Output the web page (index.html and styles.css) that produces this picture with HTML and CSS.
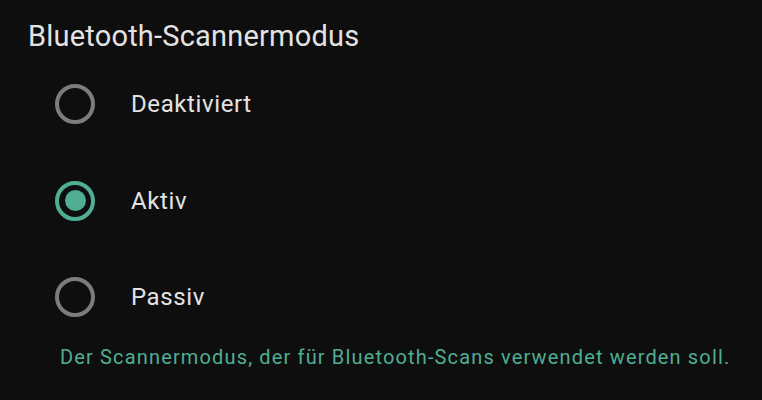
FILE: index.html
```html
<!DOCTYPE html>
<html lang="de">
<head>
    <meta charset="UTF-8">
    <title>Bluetooth-Scannermodus</title>
    <link rel="stylesheet" href="styles.css">
</head>
<body>
    <div class="dialog">
        <h1 class="dialog-title">Bluetooth-Scannermodus</h1>

        <ul class="choices">
            <li class="choice">
                <span class="radio"></span>
                <span class="choice-label">Deaktiviert</span>
            </li>
            <li class="choice">
                <span class="radio checked"></span>
                <span class="choice-label">Aktiv</span>
            </li>
            <li class="choice">
                <span class="radio"></span>
                <span class="choice-label">Passiv</span>
            </li>
        </ul>

        <p class="summary">Der Scannermodus, der für Bluetooth-Scans verwendet werden soll.</p>
    </div>
</body>
</html>
```

FILE: styles.css
```css
:root {
    --bg: #0e0e0e;
    --text: #e3e3e3;
    --muted: #7c7c7c;
    --accent: #4fae94;
}

* {
    box-sizing: border-box;
    margin: 0;
    padding: 0;
}

html, body {
    height: 100%;
}

body {
    font-family: Roboto, "Noto Sans", sans-serif;
    background-color: var(--bg);
    color: var(--text);
    overflow: hidden;
}

.dialog {
    padding: 18px 0 0 28px;
}

.dialog-title {
    font-size: 29px;
    font-weight: 400;
    line-height: 36px;
    letter-spacing: 0.2px;
}

.choices {
    list-style: none;
    margin-top: 2px;
    padding-left: 27px;
}

.choice {
    display: flex;
    align-items: center;
    height: 96.5px;
}

.radio {
    width: 40px;
    height: 40px;
    border: 4px solid var(--muted);
    border-radius: 50%;
    display: flex;
    align-items: center;
    justify-content: center;
    flex-shrink: 0;
}

.radio.checked {
    border-color: var(--accent);
}

.radio.checked::after {
    content: "";
    width: 21px;
    height: 21px;
    border-radius: 50%;
    background-color: var(--accent);
}

.choice-label {
    margin-left: 36px;
    font-size: 24px;
    letter-spacing: 0.6px;
}

.summary {
    padding-left: 32px;
    font-size: 20px;
    line-height: 22px;
    letter-spacing: 1.15px;
    color: var(--accent);
}
```
